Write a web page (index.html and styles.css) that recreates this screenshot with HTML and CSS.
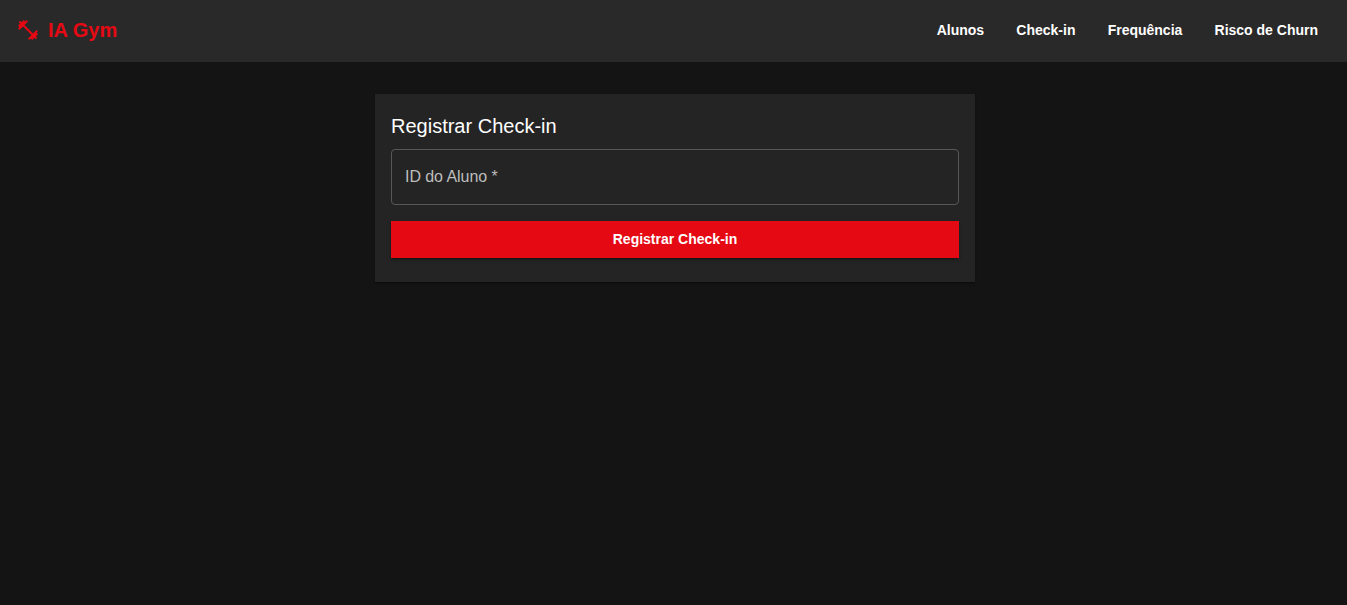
FILE: index.html
```html
<!DOCTYPE html>
<html lang="pt-BR">
<head>
<meta charset="utf-8">
<title>IA Gym</title>
<link rel="stylesheet" href="styles.css">
</head>
<body>
<header class="appbar">
  <a class="brand">
    <svg class="brand-icon" viewBox="0 0 24 24" aria-hidden="true"><path d="M20.57 14.86 22 13.43 20.57 12 17 15.57 8.43 7 12 3.43 10.57 2 9.14 3.43 7.71 2 5.57 4.14 4.14 2.71 2.71 4.14l1.43 1.43L2 7.71l1.43 1.43L2 10.57 3.43 12 7 8.43 15.57 17 12 20.57 13.43 22l1.43-1.43L16.29 22l2.14-2.14 1.43 1.43 1.43-1.43-1.43-1.43L22 16.29z"/></svg>
    <span class="brand-name">IA Gym</span>
  </a>
  <nav class="nav">
    <a class="nav-link">Alunos</a>
    <a class="nav-link">Check-in</a>
    <a class="nav-link">Frequência</a>
    <a class="nav-link">Risco de Churn</a>
  </nav>
</header>
<main class="page">
  <form class="card">
    <h1 class="title">Registrar Check-in</h1>
    <label class="field">ID do Aluno *</label>
    <button class="submit" type="button">Registrar Check-in</button>
  </form>
</main>
</body>
</html>
```
FILE: styles.css
```css
* { box-sizing: border-box; }
body {
  margin: 0;
  min-height: 100vh;
  background: #141414;
  color: #fff;
  font-family: "Liberation Sans", Arial, sans-serif;
}
.appbar {
  display: flex;
  align-items: center;
  justify-content: space-between;
  height: 62px;
  padding: 0 29px 2px 16px;
  background: #292929;
}
.brand {
  display: flex;
  align-items: center;
  gap: 8px;
  color: #e50914;
}
.brand-icon { width: 24px; height: 24px; fill: currentColor; }
.brand-name { font-size: 20px; font-weight: 700; line-height: 32px; }
.nav { display: flex; gap: 32.2px; }
.nav-link { font-size: 14px; font-weight: 700; line-height: 24px; }
.page { padding: 32px 0 0 3px; }
.card {
  width: 600px;
  height: 188px;
  margin: 0 auto;
  padding: 16px;
  background: #242424;
  box-shadow: 0 2px 1px -1px rgba(0,0,0,.2), 0 1px 1px rgba(0,0,0,.14), 0 1px 3px rgba(0,0,0,.12);
}
.title {
  margin: 0 0 7px;
  font-size: 20px;
  font-weight: 400;
  line-height: 32px;
}
.field {
  display: flex;
  align-items: center;
  height: 56px;
  padding: 0 13px;
  border: 1px solid #575757;
  border-radius: 4px;
  color: #bdbdbd;
  font-size: 16px;
  letter-spacing: -0.06px;
}
.submit {
  display: block;
  width: 100%;
  height: 37px;
  margin-top: 16px;
  padding: 0 16px 1px;
  border: 0;
  background: #e50914;
  color: #fff;
  font: 700 14px/24px "Liberation Sans", Arial, sans-serif;
  box-shadow: 0 3px 1px -2px rgba(0,0,0,.2), 0 2px 2px rgba(0,0,0,.14), 0 1px 5px rgba(0,0,0,.12);
}
```
